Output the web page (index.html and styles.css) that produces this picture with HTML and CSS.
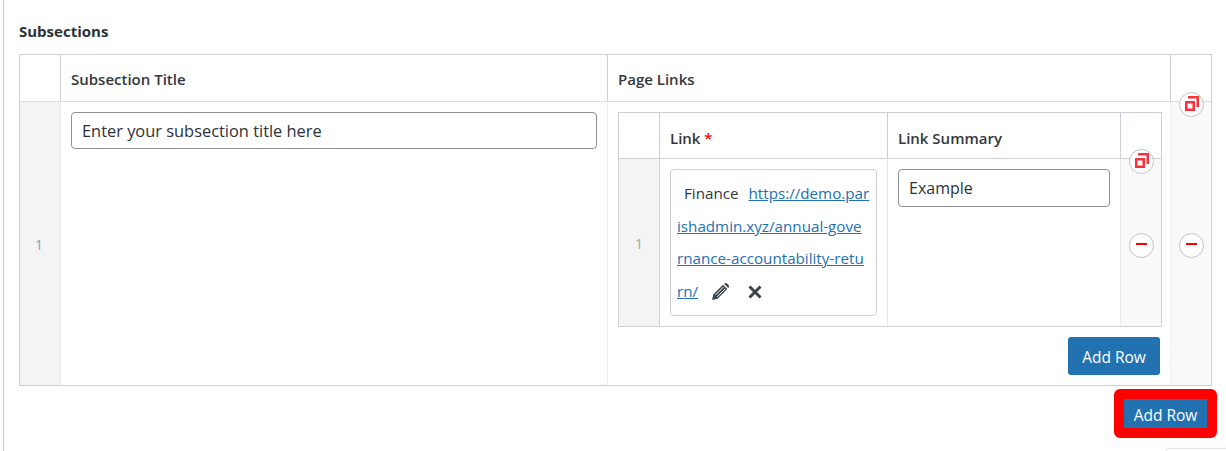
FILE: index.html
```html
<!DOCTYPE html>
<html lang="en">
<head>
<meta charset="UTF-8">
<meta name="viewport" content="width=device-width, initial-scale=1.0">
<title>Subsections</title>
<link rel="stylesheet" href="styles.css">
</head>
<body>

<div class="panel">
  <div class="field-label">Subsections</div>

  <table class="rep outer">
    <colgroup>
      <col class="c-order"><col class="c-title"><col class="c-links"><col class="c-order">
    </colgroup>
    <thead>
      <tr>
        <th></th>
        <th>Subsection Title</th>
        <th>Page Links</th>
        <th class="no-side"></th>
      </tr>
    </thead>
    <tbody>
      <tr>
        <td class="order">1</td>
        <td class="top"><input class="text-input wide" type="text" value="Enter your subsection title here"></td>
        <td class="top links-cell">
          <table class="rep inner">
            <colgroup>
              <col class="i-order"><col class="i-link"><col class="i-summary"><col class="i-order">
            </colgroup>
            <thead>
              <tr>
                <th></th>
                <th>Link <span class="req">*</span></th>
                <th>Link Summary</th>
                <th></th>
              </tr>
            </thead>
            <tbody>
              <tr>
                <td class="order">1</td>
                <td class="top">
                  <div class="link-box">
                    <span class="link-name">Finance</span>
                    <a href="#">https://demo.par<br>ishadmin.xyz/annual-gove<br>rnance-accountability-retu<br>rn/</a>
                    <svg class="act pencil" width="19" height="19" viewBox="0 0 19 19"><path d="M1 18l1.300-5.600L12 2.700l4.300 4.300-9.700 9.700z" fill="#3c434a"/><path d="M13.300 1.500c.8-.8 1.900-.8 2.700 0l1.500 1.500c.8.8.8 1.900 0 2.700l-.3.300-4.200-4.200z" fill="#3c434a"/><path d="M4.500 13l8-8M6.200 14.800l8-8" stroke="#fff" stroke-width="1"/></svg>
                    <svg class="act cross" width="14" height="14" viewBox="0 0 14 14"><path d="M1.500 1.500l11 11M12.500 1.500l-11 11" stroke="#3c434a" stroke-width="3"/></svg>
                  </div>
                </td>
                <td class="top"><input class="text-input" type="text" value="Example"></td>
                <td class="side"></td>
              </tr>
            </tbody>
          </table>
          <div class="actions"><a class="btn" href="#">Add Row</a></div>
        </td>
        <td class="side"></td>
      </tr>
    </tbody>
  </table>

  <div class="outer-actions">
    <span class="highlight"><a class="btn small" href="#">Add Row</a></span>
  </div>

  <span class="circle" style="left:1179px;top:92px"><svg class="dup" width="16" height="16" viewBox="0 0 16 16"><path d="M4 1.250h9.750V11M2.250 6.250h7.500v7.500h-7.500z" fill="none" stroke="#f9333b" stroke-width="2.500"/></svg></span>
  <span class="circle" style="left:1179px;top:233px"><i class="minus"></i></span>
  <span class="circle" style="left:1129px;top:149px"><svg class="dup" width="16" height="16" viewBox="0 0 16 16"><path d="M4 1.250h9.750V11M2.250 6.250h7.500v7.500h-7.500z" fill="none" stroke="#f9333b" stroke-width="2.500"/></svg></span>
  <span class="circle" style="left:1129px;top:233px"><i class="minus"></i></span>
  <span class="corner"></span>
</div>

</body>
</html>
```

FILE: styles.css
```css
html, body {
  margin: 0;
  padding: 0;
  height: 100%;
  overflow: hidden;
  background: #fff;
  font-family: 'Open Sans', 'Noto Sans', sans-serif;
  color: #32373c;
}
.panel {
  position: relative;
  height: 100%;
  margin-left: 3px;
  padding: 21px 0 0 15px;
  border-left: 1px solid #ccc;
  box-sizing: border-box;
}
.field-label {
  font-size: 15px;
  font-weight: 700;
  line-height: 20px;
  margin-bottom: 13px;
  color: #2c3338;
}

.rep {
  border-collapse: collapse;
  table-layout: fixed;
  background: #fff;
}
.rep th, .rep td {
  border: 1px solid #ccd0d4;
  box-sizing: border-box;
}
.rep th {
  font-size: 15px;
  font-weight: 600;
  text-align: left;
  padding: 2px 10px 0;
  color: #32373c;
}
.rep td {
  padding: 10px;
  vertical-align: top;
}
.outer { width: 1192px; }
.outer > thead > tr { height: 47px; }
.outer > tbody > tr { height: 284px; }
.outer > tbody > tr > td { border-color: #eee; border-left-color: #ccd0d4; border-bottom-color: #ccd0d4; }
.outer > tbody > tr > td.top { border-left-color: #eee; border-top-color: #ccd0d4; }
.outer > thead > tr > th { border-bottom-color: #ddd; }
.c-order { width: 41px; }
.c-title { width: 547px; }
.c-links { width: 563px; }
.inner { width: 544px; }
.inner > thead > tr { height: 46px; }
.inner > tbody > tr { height: 168px; }
.inner th { padding-top: 5px; }
.i-order { width: 41px; }
.i-link { width: 228px; }
.i-summary { width: 233px; }

.rep td.order {
  background: #f4f4f4;
  color: #8ba4bb;
  font-size: 15px;
  text-align: center;
  vertical-align: middle;
  padding: 0 2px 0 0;
}
.inner td.order { color: #aaa69a; padding: 0; }
.rep td.side {
  background: #f9f9f9;
  border-color: #ccd0d4;
  padding: 0;
}
.inner th, .inner td { border-color: #ccd0d4; }
.inner td.top { border-color: #e6e8ea; border-top-color: #ccd0d4; border-bottom-color: #ccd0d4; }

.text-input {
  display: block;
  width: 100%;
  height: 38px;
  box-sizing: border-box;
  padding: 0 10px;
  border: 1px solid #8c8f94;
  border-radius: 4px;
  font: 16px 'Open Sans', 'Noto Sans', sans-serif;
  color: #2c3338;
  background: #fff;
  outline: none;
}
.text-input.wide { height: 37px; font-size: 16.400px; }
.req { color: #f00; }

.link-box {
  width: 207px;
  height: 147px;
  box-sizing: border-box;
  padding: 7px 5px 0 6px;
  border: 1px solid #ccd0d4;
  border-radius: 4px;
  font-size: 15.200px;
  line-height: 32.500px;
  word-break: break-all;
}
.link-name { margin-left: 7px; margin-right: 6px; }
.link-box a { color: #2271b1; }
.act { margin-left: 9px; }
.act.pencil { vertical-align: -4px; }
.act.cross { margin-left: 14px; vertical-align: -2px; }

.actions {
  display: flex;
  justify-content: flex-end;
  padding: 10px 0 0 0;
}
.btn {
  display: inline-block;
  width: 92px;
  height: 38px;
  line-height: 40px;
  text-align: center;
  font-size: 15.500px;
  color: #fff;
  text-decoration: none;
  background: #2271b1;
  border-radius: 3px;
}
.btn.small {
  display: block;
  width: 83px;
  height: 29px;
  line-height: 33px;
  border-radius: 0;
}

.outer-actions {
  display: flex;
  justify-content: flex-end;
  margin-top: 3px;
  padding-right: 9px;
}
.highlight {
  display: block;
  border: 10px solid #f00;
  border-radius: 6px;
}

.circle {
  position: absolute;
  width: 25px;
  height: 25px;
  margin-left: -4px;
  box-sizing: border-box;
  border: 1px solid #bfc3c8;
  border-radius: 50%;
  background: #fff;
  display: flex;
  align-items: center;
  justify-content: center;
}
.dup { margin: -1px 0 0 1px; }
.minus {
  display: block;
  width: 11px;
  height: 2px;
  margin-top: -3px;
  background: #f00;
}
.corner {
  position: absolute;
  right: 0;
  top: 448px;
  width: 60px;
  height: 6px;
  border-top: 1px solid #e5e5e5;
  border-left: 1px solid #e5e5e5;
  border-top-left-radius: 4px;
}
```
